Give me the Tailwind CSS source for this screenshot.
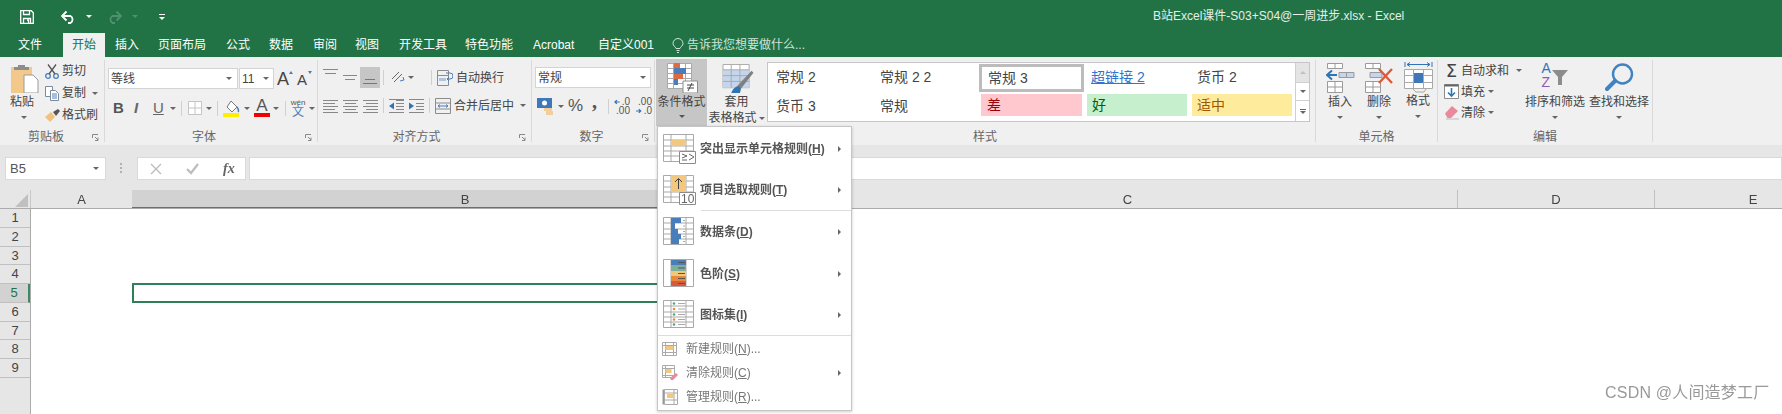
<!DOCTYPE html>
<html lang="zh-CN">
<head>
  <meta charset="UTF-8">
  <title>B站Excel课件-S03+S04@一周进步.xlsx - Excel</title>
  <script src="https://cdn.jsdelivr.net/npm/@tailwindcss/browser@4"></script>
</head>
<body class="bg-white overflow-hidden">
<div class="relative w-[1782px] h-[414px] overflow-hidden flex flex-col blur-[0.4px] text-[12px] text-[#444] font-['Liberation_Sans','Noto_Sans_CJK_SC',sans-serif]">

  <!-- title bar -->
  <div class="h-[33px] shrink-0 bg-[#217346] flex items-center relative">
    <svg class="ml-[20px]" width="14" height="14" viewBox="0 0 14 14" fill="none" stroke="#fff" stroke-width="1.3"><path d="M.7.7h10.6l2 2v10.6H.7z"/><path d="M3.5 1v3.5h6V1M3.5 13V8.5h7V13"/><path d="M7 10h1.5v3" /></svg>
    <svg class="ml-[27px]" width="15" height="14" viewBox="0 0 15 14" fill="none" stroke="#fff" stroke-width="1.8"><path d="M1 6h8.5a4 4 0 0 1 0 7H7"/><path d="M5.500 1.500 1 6l4.500 4.500"/></svg>
    <i class="block ml-[10px] w-0 h-0 border-x-[3px] border-x-transparent border-t-[3px] border-t-white"></i>
    <svg class="ml-[15px]" width="15" height="14" viewBox="0 0 15 14" fill="none" stroke="#4f9170" stroke-width="1.8"><path d="M14 6H5.500a4 4 0 0 0 0 7H8"/><path d="M9.500 1.500 14 6l-4.500 4.500"/></svg>
    <i class="block ml-[10px] w-0 h-0 border-x-[3px] border-x-transparent border-t-[3px] border-t-[#4f9170]"></i>
    <div class="ml-[21px] flex flex-col items-center gap-[2px]"><i class="block w-[6px] h-px bg-white"></i><i class="block w-0 h-0 border-x-[3px] border-x-transparent border-t-[3px] border-t-white"></i></div>
    <span class="absolute left-[1153px] top-[8px] text-[#e4efe9] text-[12px] leading-[17px] whitespace-nowrap">B站Excel课件-S03+S04@一周进步.xlsx - Excel</span>
  </div>

  <!-- tabs -->
  <div class="h-[24px] shrink-0 bg-[#217346] flex text-white leading-[24px] whitespace-nowrap">
    <span class="ml-[18px] w-[24px]">文件</span>
    <span class="ml-[21px] w-[42px] text-center bg-[#f0f0f0] text-[#217346]">开始</span>
    <span class="ml-[10px] w-[24px]">插入</span>
    <span class="ml-[19px] w-[48px]">页面布局</span>
    <span class="ml-[20px] w-[24px]">公式</span>
    <span class="ml-[19px] w-[24px]">数据</span>
    <span class="ml-[20px] w-[24px]">审阅</span>
    <span class="ml-[18px] w-[24px]">视图</span>
    <span class="ml-[20px] w-[48px]">开发工具</span>
    <span class="ml-[18px] w-[48px]">特色功能</span>
    <span class="ml-[20px] w-[46px]">Acrobat</span>
    <span class="ml-[19px] w-[58px]">自定义001</span>
    <svg class="ml-[16px] mt-[5px]" width="12" height="15" viewBox="0 0 12 15" fill="none" stroke="#cfe3d8"><path d="M4 10.500C3.500 8.500 1 8 1 5.500a5 5 0 0 1 10 0C11 8 8.500 8.500 8 10.500z"/><path d="M4.500 12.500h3M5 14.500h2"/></svg>
    <span class="ml-[3px] text-[#cfe3d8]">告诉我您想要做什么...</span>
  </div>

  <!-- ribbon -->
  <div class="h-[88px] shrink-0 bg-[#f0f0f0] flex items-start pt-[3px] whitespace-nowrap">

    <!-- clipboard -->
    <div class="relative w-[105px] h-[82px] border-r border-[#d9d9d9] flex flex-col">
      <div class="h-[69px] flex">
        <div class="w-[45px] pl-[10px] pt-[3px] flex flex-col items-start">
          <svg width="29" height="30" viewBox="0 0 29 30"><path d="M1 4h21v26H1z" fill="#f3c98b"/><path d="M8 2h7v2h4v3H4V4h4z" fill="#8c8c8c"/><path d="M14 12h9l5 5v13H14z" fill="#fff" stroke="#9a9a9a"/></svg>
          <span class="leading-[18px] text-[#444]">粘贴</span>
          <i class="block mt-[5px] ml-[11px] w-0 h-0 border-x-[3px] border-x-transparent border-t-[3px] border-t-[#666]"></i>
        </div>
        <div class="flex flex-col">
          <div class="h-[22px] flex items-center"><svg width="14" height="15" viewBox="0 0 14 15" fill="none" stroke="#4a7ebb" stroke-width="1.300"><circle cx="3" cy="12" r="2.300"/><circle cx="11" cy="12" r="2.300"/><path d="M4 10 11 0.500M10 10 3 0.500" stroke="#555"/></svg><span class="ml-[3px]">剪切</span></div>
          <div class="h-[22px] flex items-center"><svg width="14" height="15" viewBox="0 0 14 15" fill="#fff" stroke="#7d8a99"><path d="M.5.500h7v10h-7z"/><path d="M5.500 4.500h5l3 3v7h-8z"/><path d="M7 8h5M7 10h5M7 12h5" stroke="#4a7ebb"/></svg><span class="ml-[3px]">复制</span><i class="block ml-[6px] w-0 h-0 border-x-[3px] border-x-transparent border-t-[3px] border-t-[#666]"></i></div>
          <div class="h-[22px] flex items-center"><svg width="15" height="13" viewBox="0 0 15 13"><path d="M0 8 6 3l4 5-5 5z" fill="#f0c27e"/><path d="M8 3l5-3 2 2-4 5z" fill="#555"/></svg><span class="ml-[2px]">格式刷</span></div>
        </div>
      </div>
      <div class="h-[13px] leading-[16px] text-center text-[#666] pr-[12px]">剪贴板</div>
      <svg class="absolute right-[5px] bottom-[1px]" width="7" height="7" viewBox="0 0 7 7" fill="none" stroke="#888"><path d="M.5 4V.5H6M3 3l3 3M6 3.500V6.500H3"/></svg>
    </div>

    <!-- font -->
    <div class="relative w-[213px] h-[82px] border-r border-[#d9d9d9] flex flex-col">
      <div class="h-[69px] pt-[8px] flex flex-col">
        <div class="h-[21px] flex items-center">
          <div class="ml-[3px] w-[130px] h-[21px] bg-white border border-[#d4d4d4] flex items-center pl-[2px] pr-[5px] justify-between"><span>等线</span><i class="block w-0 h-0 border-x-[3px] border-x-transparent border-t-[3px] border-t-[#666]"></i></div>
          <div class="ml-px w-[35px] h-[21px] bg-white border border-[#d4d4d4] flex items-center pl-[2px] pr-[4px] justify-between"><span>11</span><i class="block w-0 h-0 border-x-[3px] border-x-transparent border-t-[3px] border-t-[#666]"></i></div>
          <span class="ml-[3px] w-[13px] text-[18px] leading-[20px] relative">A<i class="absolute -right-[3px] top-[2px] w-0 h-0 border-x-[2px] border-x-transparent border-b-[3px] border-b-[#4a7ebb]"></i></span>
          <span class="ml-[7px] w-[12px] text-[15px] leading-[20px] relative mt-[2px]">A<i class="absolute -right-[3px] top-[1px] w-0 h-0 border-x-[2px] border-x-transparent border-t-[3px] border-t-[#4a7ebb]"></i></span>
        </div>
        <div class="mt-[9px] h-[20px] flex items-center">
          <span class="ml-[8px] w-[10px] font-bold text-[15px] text-[#555]">B</span>
          <span class="ml-[11px] w-[9px] italic font-bold text-[15px] text-[#666]">I</span>
          <span class="ml-[10px] w-[13px] text-[15px] underline text-[#666]">U</span>
          <i class="block ml-[4px] w-0 h-0 border-x-[3px] border-x-transparent border-t-[3px] border-t-[#666]"></i>
          <i class="block ml-[5px] w-px h-[15px] bg-[#d0d0d0]"></i>
          <svg class="ml-[6px]" width="14" height="14" viewBox="0 0 14 14" fill="#fff" stroke="#c4c4c4"><path d="M.5.500h13v13H.5zM7 .500v13M.5 7h13"/></svg>
          <i class="block ml-[4px] w-0 h-0 border-x-[3px] border-x-transparent border-t-[3px] border-t-[#666]"></i>
          <i class="block ml-[5px] w-px h-[15px] bg-[#d0d0d0]"></i>
          <svg class="ml-[5px]" width="17" height="17" viewBox="0 0 17 17"><path d="M8 1 14 7l-5 5-5-5z" fill="#fff" stroke="#777"/><path d="M14 7c2 3 2 4 1 5" stroke="#4a7ebb" fill="none" stroke-width="1.500"/><path d="M0 13h16v4H0z" fill="#ffee00"/></svg>
          <i class="block ml-[4px] w-0 h-0 border-x-[3px] border-x-transparent border-t-[3px] border-t-[#666]"></i>
          <div class="ml-[4px] w-[16px] flex flex-col items-center"><span class="text-[17px] leading-[14px] text-[#555]">A</span><i class="block w-[16px] h-[4px] bg-[#f00000]"></i></div>
          <i class="block ml-[3px] w-0 h-0 border-x-[3px] border-x-transparent border-t-[3px] border-t-[#666]"></i>
          <i class="block ml-[6px] w-px h-[15px] bg-[#d0d0d0]"></i>
          <div class="ml-[5px] w-[14px] flex flex-col items-center leading-none"><span class="text-[8px] leading-[7px] text-[#555]">wén</span><span class="text-[12px] text-[#4a7ebb] leading-[12px]">文</span></div>
          <i class="block ml-[4px] w-0 h-0 border-x-[3px] border-x-transparent border-t-[3px] border-t-[#666]"></i>
        </div>
      </div>
      <div class="h-[13px] leading-[16px] text-center text-[#666] pr-[14px]">字体</div>
      <svg class="absolute right-[5px] bottom-[1px]" width="7" height="7" viewBox="0 0 7 7" fill="none" stroke="#888"><path d="M.5 4V.5H6M3 3l3 3M6 3.500V6.500H3"/></svg>
    </div>

    <!-- alignment -->
    <div class="relative w-[214px] h-[82px] border-r border-[#d9d9d9] flex flex-col">
      <div class="h-[69px] flex">
        <div class="pl-[5px] pt-[7px] flex flex-col">
          <div class="h-[21px] flex items-center">
            <svg width="15" height="8" class="mb-[10px]" viewBox="0 0 15 8" stroke="#888"><path d="M0 .500h15M2 4.500h11"/></svg>
            <svg width="14" height="6" class="ml-[5px]" viewBox="0 0 14 6" stroke="#888"><path d="M0 .500h14M2 4.500h10"/></svg>
            <div class="ml-[3px] w-[20px] h-[21px] bg-[#c6c6c6] flex items-end justify-center pb-[3px]"><svg width="14" height="6" viewBox="0 0 14 6" stroke="#777"><path d="M2 .500h10M0 4.500h14"/></svg></div>
            <i class="block ml-[3px] w-px h-[15px] bg-[#d0d0d0]"></i>
            <svg class="ml-[7px]" width="14" height="13" viewBox="0 0 14 13" fill="none" stroke="#666"><path d="M1 8 8 1M3 11 11 3"/><path d="M9 10l4-1-1-3" stroke="#4a7ebb"/></svg>
            <i class="block ml-[3px] w-0 h-0 border-x-[3px] border-x-transparent border-t-[3px] border-t-[#666]"></i>
            <i class="block ml-[17px] w-px h-[15px] bg-[#d0d0d0]"></i>
            <svg class="ml-[5px]" width="16" height="16" viewBox="0 0 16 16" fill="none" stroke="#8c8c8c"><path d="M.5.500h11v15H.5zM.5 5.500h11"/><path d="M2 8h7v3H2z" fill="#a9c4e4" stroke="none"/><path d="M9 3h4a2 2 0 0 1 0 6H10m2-2-2 2 2 2" stroke="#4a7ebb"/></svg>
            <span class="ml-[3px]">自动换行</span>
          </div>
          <div class="mt-[7px] h-[21px] flex items-center">
            <svg width="15" height="14" viewBox="0 0 15 14" stroke="#888"><path d="M0 1.500h15M0 4.500h12M0 7.500h15M0 10.500h12M0 13.500h15"/></svg>
            <svg class="ml-[5px]" width="15" height="14" viewBox="0 0 15 14" stroke="#888"><path d="M0 1.500h15M2 4.500h11M0 7.500h15M2 10.500h11M0 13.500h15"/></svg>
            <svg class="ml-[5px]" width="15" height="14" viewBox="0 0 15 14" stroke="#888"><path d="M0 1.500h15M3 4.500h12M0 7.500h15M3 10.500h12M0 13.500h15"/></svg>
            <i class="block ml-[5px] w-px h-[15px] bg-[#d0d0d0]"></i>
            <svg class="ml-[5px]" width="15" height="14" viewBox="0 0 15 14"><path d="M7 1.500h8M7 4.500h8M7 7.500h8M7 10.500h8M0 13.500h15M0 .500h15" stroke="#888"/><path d="M0 7l5-3.500v7z" fill="#2f75b5"/></svg>
            <svg class="ml-[5px]" width="15" height="14" viewBox="0 0 15 14"><path d="M0 .500h15M7 4.500h8M7 7.500h8M7 10.500h8M0 13.500h15" stroke="#888"/><path d="M5 7 0 3.500v7z" fill="#2f75b5"/></svg>
            <i class="block ml-[5px] w-px h-[15px] bg-[#d0d0d0]"></i>
            <svg class="ml-[5px]" width="16" height="16" viewBox="0 0 16 16" fill="none" stroke="#8c8c8c"><path d="M.5.500h15v15H.5zM.5 5h15M.5 11h15"/><path d="M3 8h10M5 6.500 3 8l2 1.500M11 6.500 13 8l-2 1.500" stroke="#4a7ebb"/></svg>
            <span class="ml-[3px]">合并后居中</span>
            <i class="block ml-[6px] w-0 h-0 border-x-[3px] border-x-transparent border-t-[3px] border-t-[#666]"></i>
          </div>
        </div>
      </div>
      <div class="h-[13px] leading-[16px] text-center text-[#666] pr-[16px]">对齐方式</div>
      <svg class="absolute right-[5px] bottom-[1px]" width="7" height="7" viewBox="0 0 7 7" fill="none" stroke="#888"><path d="M.5 4V.5H6M3 3l3 3M6 3.500V6.500H3"/></svg>
    </div>

    <!-- number -->
    <div class="relative w-[123px] h-[82px] border-r border-[#d9d9d9] flex flex-col">
      <div class="h-[69px] pt-[7px] pl-[3px] flex flex-col">
        <div class="w-[116px] h-[21px] bg-white border border-[#d4d4d4] flex items-center pl-[2px] pr-[4px] justify-between"><span>常规</span><i class="block w-0 h-0 border-x-[3px] border-x-transparent border-t-[3px] border-t-[#666]"></i></div>
        <div class="mt-[9px] h-[18px] flex items-center">
          <svg class="ml-[2px]" width="16" height="17" viewBox="0 0 16 17"><path d="M0 0h15v10H0z" fill="#3f78b8"/><circle cx="7.500" cy="5" r="2.500" fill="#fff"/><path d="M7 10h8v3H7zM9 13h7v4H9z" fill="#f2cf9a"/></svg>
          <i class="block ml-[5px] w-0 h-0 border-x-[3px] border-x-transparent border-t-[3px] border-t-[#666]"></i>
          <span class="ml-[4px] w-[15px] text-[17px] leading-[18px] text-[#555]">%</span>
          <span class="ml-[9px] mb-[10px] w-[6px] text-[20px] font-bold leading-[14px] text-[#555] font-['Liberation_Serif',serif]">,</span>
          <i class="block ml-[10px] w-px h-[15px] bg-[#d0d0d0]"></i>
          <div class="ml-[5px] w-[16px] flex flex-col text-[10px] leading-[8px] text-[#555]">
            <div class="h-[8px] flex items-center justify-end"><svg width="6" height="6" viewBox="0 0 6 6" fill="none" stroke="#2f75b5" stroke-width="1.300"><path d="M6 3H1M3 1 1 3l2 2"/></svg><span class="ml-[2px]">.0</span></div>
            <div class="h-[8px] mt-px flex items-center justify-end"><span>.00</span></div>
          </div>
          <div class="ml-[6px] w-[16px] flex flex-col text-[10px] leading-[8px] text-[#555]">
            <div class="h-[8px] flex items-center justify-end"><span>.00</span></div>
            <div class="h-[8px] mt-px flex items-center justify-end"><svg width="6" height="6" viewBox="0 0 6 6" fill="none" stroke="#2f75b5" stroke-width="1.300"><path d="M0 3h5M3 1l2 2-2 2"/></svg><span class="ml-[2px]">.0</span></div>
          </div>
        </div>
      </div>
      <div class="h-[13px] leading-[16px] text-center text-[#666] pr-[3px]">数字</div>
      <svg class="absolute right-[5px] bottom-[1px]" width="7" height="7" viewBox="0 0 7 7" fill="none" stroke="#888"><path d="M.5 4V.5H6M3 3l3 3M6 3.500V6.500H3"/></svg>
    </div>

    <!-- styles -->
    <div class="w-[661px] h-[82px] border-r border-[#d9d9d9] flex flex-col">
      <div class="h-[69px] flex items-start">
        <div class="ml-px w-[51px] h-[67px] -mt-px bg-[#c6c6c6] flex flex-col items-center">
          <svg class="mt-[4px] ml-px" width="31" height="30" viewBox="0 0 31 30"><path d="M.5.500h24v25H.5zM.5 5.500h24M.5 10.500h24M.5 15.500h24M.5 20.500h24M6.500.500v25M18.500.500v25" fill="#fff" stroke="#a9a9a9"/><path d="M7 0h6v5H7z" fill="#dc6a43"/><path d="M7 5h12v6H7z" fill="#4a7ebb"/><path d="M7 11h9v5H7z" fill="#dc6a43"/><path d="M7 16h4v6H7z" fill="#4a7ebb"/><path d="M16 18h14.500v12H16z" fill="#fff" stroke="#8c8c8c"/><path d="M20 22h7M20 25h7M25 20l-4 8" stroke="#444" fill="none"/></svg>
          <span class="mt-[1px] leading-[16px]">条件格式</span>
          <i class="block mt-[5px] w-0 h-0 border-x-[3px] border-x-transparent border-t-[3px] border-t-[#555]"></i>
        </div>
        <div class="ml-[2px] w-[55px] h-[66px] flex flex-col items-center">
          <svg class="mt-[4px] ml-[3px]" width="32" height="30" viewBox="0 0 32 30"><path d="M.5.500h27v24H.5z" fill="#fff" stroke="#a9a9a9"/><path d="M.5 6h27v18.500H.5z" fill="#c5d6ec"/><path d="M.5 6h27M.5 12h27M.5 18h27M9 .500v24M18 .500v24" stroke="#a9a9a9" fill="none"/><path d="M14 24 30 7l2 2-14 18z" fill="#808080"/><path d="M9 30c2-6 6-8 9-6l1 2-1 4z" fill="#2f75b5"/></svg>
          <span class="leading-[16px] mt-px">套用</span>
          <span class="leading-[16px] flex items-center">表格格式<i class="block ml-[2px] w-0 h-0 border-x-[3px] border-x-transparent border-t-[3px] border-t-[#666]"></i></span>
        </div>
        <div class="ml-[3px] mt-[2px] w-[543px] h-[60px] flex bg-white border border-[#c6c6c6]">
          <div class="w-[528px] grid grid-cols-[105px_105px_105px_105px_105px] grid-rows-[29px_29px] text-[14px] text-[#444] pl-px">
            <div class="flex items-center pl-[7px]">常规 2</div>
            <div class="flex items-center pl-[6px]">常规 2 2</div>
            <div class="flex items-center pl-[6px] mt-px border-[3px] border-[#bcbcbc]">常规 3</div>
            <div class="flex items-center pl-[7px] text-[#2f75d0] underline">超链接 2</div>
            <div class="flex items-center pl-[8px]">货币 2</div>
            <div class="flex items-center pl-[7px]">货币 3</div>
            <div class="flex items-center pl-[6px]">常规</div>
            <div class="flex items-center pl-[6px] ml-[2px] mr-[2px] mt-[2px] mb-[5px] bg-[#ffc7ce] text-[#9c0006]">差</div>
            <div class="flex items-center pl-[5px] ml-[3px] mr-[2px] mt-[2px] mb-[5px] bg-[#c6efce] text-[#006100]">好</div>
            <div class="flex items-center pl-[5px] ml-[3px] mr-[2px] mt-[2px] mb-[5px] bg-[#ffeb9c] text-[#9c5700]">适中</div>
          </div>
          <div class="w-[14px] ml-auto flex flex-col border-l border-[#d0d0d0] bg-[#f0f0f0]">
            <div class="h-[20px] bg-[#e4e4e4] border-b border-[#d0d0d0] flex items-center justify-center"><i class="block w-0 h-0 border-x-[3px] border-x-transparent border-b-[3px] border-b-[#c0c0c0]"></i></div>
            <div class="h-[18px] bg-white border-b border-[#d0d0d0] flex items-center justify-center"><i class="block w-0 h-0 border-x-[3px] border-x-transparent border-t-[3px] border-t-[#666]"></i></div>
            <div class="flex-1 bg-white flex flex-col items-center justify-center gap-[1px]"><i class="block w-[6px] h-px bg-[#666]"></i><i class="block w-0 h-0 border-x-[3px] border-x-transparent border-t-[3px] border-t-[#666]"></i></div>
          </div>
        </div>
      </div>
      <div class="h-[13px] leading-[16px] text-center text-[#666]">样式</div>
    </div>

    <!-- cells -->
    <div class="w-[122px] h-[82px] border-r border-[#d9d9d9] flex flex-col">
      <div class="h-[69px] flex">
        <div class="ml-[9px] w-[30px] flex flex-col items-center">
          <svg class="mt-[3px]" width="29" height="30" viewBox="0 0 29 30" fill="#fff" stroke="#9a9a9a"><path d="M1.500.500h15v5h-15zM9 .500v5M1.500 18.500h15v11h-15zM1.500 24h15M9 18.500v11"/><path d="M13 9.500h15v5H13zM20.500 9.500v5" fill="#c5d6ec"/><path d="M11 12H1M6 7.500l-5 4.500 5 4.500" fill="none" stroke="#2f75b5" stroke-width="2"/></svg>
          <span class="leading-[16px] mt-px">插入</span>
          <i class="block mt-[6px] w-0 h-0 border-x-[3px] border-x-transparent border-t-[3px] border-t-[#666]"></i>
        </div>
        <div class="ml-[9px] w-[30px] flex flex-col items-center">
          <svg class="mt-[3px]" width="30" height="30" viewBox="0 0 30 30" fill="#fff" stroke="#9a9a9a"><path d="M1.500.500h15v5h-15zM9 .500v5M1.500 18.500h15v11h-15zM1.500 24h15M9 18.500v11"/><path d="M6 9.500h12v5H6z" fill="#c5d6ec"/><path d="M15 6l13 14M28 6 15 20" fill="none" stroke="#dc5a3c" stroke-width="2.400"/></svg>
          <span class="leading-[16px] mt-px">删除</span>
          <i class="block mt-[6px] w-0 h-0 border-x-[3px] border-x-transparent border-t-[3px] border-t-[#666]"></i>
        </div>
        <div class="ml-[9px] w-[30px] flex flex-col items-center">
          <svg class="mt-[2px]" width="29" height="31" viewBox="0 0 29 31" fill="none"><path d="M1 0v5M28 0v5M3 2.500h23M6 .500 3 2.500l3 2M23 .500l3 2-3 2" stroke="#2f75b5"/><path d="M.5 7.500h28v19H.5zM.5 13.500h28M.5 20.500h28M9.500 7.500v19M19.500 7.500v19" stroke="#a9a9a9" fill="#fff"/><path d="M10 11h9v10h-9z" fill="#3f78b8"/><path d="M9 27l3 3h8l2-3" stroke="#a9a9a9"/></svg>
          <span class="leading-[16px]">格式</span>
          <i class="block mt-[6px] w-0 h-0 border-x-[3px] border-x-transparent border-t-[3px] border-t-[#666]"></i>
        </div>
      </div>
      <div class="h-[13px] leading-[16px] text-center text-[#666]">单元格</div>
    </div>

    <!-- editing -->
    <div class="w-[215px] h-[82px] border-r border-[#d9d9d9] flex flex-col">
      <div class="h-[69px] flex">
        <div class="ml-[6px] w-[78px] flex flex-col">
          <div class="h-[21px] flex items-center"><span class="w-[15px] text-center text-[18px] leading-[18px] text-[#444] font-['DejaVu_Sans',sans-serif]">Σ</span><span class="ml-[2px]">自动求和</span><i class="block ml-[7px] w-0 h-0 border-x-[3px] border-x-transparent border-t-[3px] border-t-[#666]"></i></div>
          <div class="h-[21px] flex items-center"><svg width="15" height="15" viewBox="0 0 15 15" fill="#fff" stroke="#8c8c8c"><path d="M.5.500h14v14H.5z"/><path d="M.5 1.500h14" stroke="#666" stroke-width="2"/><path d="M7.500 4v8M4 8.500l3.500 3.500L11 8.500" fill="none" stroke="#2f75b5" stroke-width="1.600"/></svg><span class="ml-[2px]">填充</span><i class="block ml-[3px] w-0 h-0 border-x-[3px] border-x-transparent border-t-[3px] border-t-[#666]"></i></div>
          <div class="h-[21px] flex items-center"><svg width="15" height="15" viewBox="0 0 15 15"><path d="M1 8.500 8 1l6 5-7 7H3.500z" fill="#e88a9c"/><path d="M2 14h13" stroke="#bbb"/></svg><span class="ml-[2px]">清除</span><i class="block ml-[3px] w-0 h-0 border-x-[3px] border-x-transparent border-t-[3px] border-t-[#666]"></i></div>
        </div>
        <div class="ml-[3px] w-[60px] flex flex-col items-center">
          <div class="h-[32px] w-[30px] mt-px ml-[3px] flex">
            <div class="flex flex-col text-[14px] leading-[14px]"><span class="text-[#2f75b5]">A</span><span class="text-[#8e5bb5]">Z</span></div>
            <svg class="mt-[9px] ml-px" width="16" height="15" viewBox="0 0 16 15"><path d="M0 0h16L10 7v8H6V7z" fill="#8c8c8c"/></svg>
          </div>
          <span class="leading-[16px] mt-px">排序和筛选</span>
          <i class="block mt-[6px] w-0 h-0 border-x-[3px] border-x-transparent border-t-[3px] border-t-[#666]"></i>
        </div>
        <div class="ml-[4px] w-[60px] flex flex-col items-center">
          <svg class="mt-[3px]" width="29" height="29" viewBox="0 0 29 29" fill="none" stroke="#3f83c0"><circle cx="17.500" cy="11" r="9.500" stroke-width="2.400"/><path d="M10 18 2 26" stroke-width="4" stroke-linecap="round"/></svg>
          <span class="leading-[16px] mt-[2px]">查找和选择</span>
          <i class="block mt-[6px] w-0 h-0 border-x-[3px] border-x-transparent border-t-[3px] border-t-[#666]"></i>
        </div>
      </div>
      <div class="h-[13px] leading-[16px] text-center text-[#666]">编辑</div>
    </div>
  </div>

  <!-- formula bar -->
  <div class="h-[45px] shrink-0 bg-[#e6e6e6] pt-[12px] flex items-start">
    <div class="ml-[5px] w-[101px] h-[23px] bg-white border border-[#d9d9d9] flex items-center justify-between pl-[4px] pr-[6px] text-[13px] text-[#555]"><span>B5</span><i class="block w-0 h-0 border-x-[3px] border-x-transparent border-t-[3px] border-t-[#666]"></i></div>
    <div class="ml-[14px] mt-[6px] flex flex-col gap-[2px]"><i class="block w-[2px] h-[2px] bg-[#b0b0b0]"></i><i class="block w-[2px] h-[2px] bg-[#b0b0b0]"></i><i class="block w-[2px] h-[2px] bg-[#b0b0b0]"></i></div>
    <div class="ml-[15px] w-[109px] h-[23px] bg-white border border-[#d9d9d9] flex items-center">
      <svg class="ml-[12px]" width="12" height="12" viewBox="0 0 12 12" stroke="#bdbdbd" stroke-width="1.400"><path d="M1 1l10 10M11 1 1 11"/></svg>
      <svg class="ml-[24px]" width="13" height="12" viewBox="0 0 13 12" fill="none" stroke="#bdbdbd" stroke-width="2.200"><path d="M1 6l4 4 7-9"/></svg>
      <span class="ml-[24px] font-['Liberation_Serif',serif] italic font-bold text-[14px] text-[#666]">fx</span>
    </div>
    <div class="ml-[3px] flex-1 h-[23px] bg-white border border-[#d9d9d9]"></div>
  </div>

  <!-- column headers -->
  <div class="h-[19px] shrink-0 bg-[#e6e6e6] flex border-b border-[#ababab] text-[13px] leading-[19px] text-center text-[#444] overflow-hidden">
    <div class="w-[31px] shrink-0 border-r border-[#c8c8c8] flex justify-end items-end pr-[2px] pb-[1px]"><i class="block w-0 h-0 border-l-[13px] border-l-transparent border-b-[13px] border-b-[#c0c0c0]"></i></div>
    <div class="w-[101px] shrink-0">A</div>
    <div class="w-[666px] shrink-0 bg-[#d2d2d2] border-b-2 border-[#3c8a62] h-[19px]">B</div>
    <div class="w-[660px] shrink-0 border-r border-[#c0c0c0]">C</div>
    <div class="w-[197px] shrink-0 border-r border-[#c0c0c0]">D</div>
    <div class="w-[196px] shrink-0">E</div>
  </div>

  <!-- sheet -->
  <div class="flex-1 flex relative">
    <div class="w-[31px] h-full bg-[#e6e6e6] border-r border-[#ababab] flex flex-col text-[13px] text-center text-[#444] leading-[18px]">
      <div class="h-[18.75px] border-b border-[#c0c0c0]">1</div>
      <div class="h-[18.75px] border-b border-[#c0c0c0]">2</div>
      <div class="h-[18.75px] border-b border-[#c0c0c0]">3</div>
      <div class="h-[18.75px] border-b border-[#c0c0c0]">4</div>
      <div class="h-[18.75px] bg-[#d2d2d2] border-r-2 border-r-[#3c8a62] border-b border-[#c0c0c0] text-[#217346]">5</div>
      <div class="h-[18.75px] border-b border-[#c0c0c0]">6</div>
      <div class="h-[18.75px] border-b border-[#c0c0c0]">7</div>
      <div class="h-[18.75px] border-b border-[#c0c0c0]">8</div>
      <div class="h-[18.75px] border-b border-[#c0c0c0]">9</div>
    </div>
    <div class="absolute left-[132px] top-[74px] w-[666px] h-[20px] border-2 border-[#2f8059]"></div>
  </div>

  <!-- conditional format menu -->
  <div class="absolute left-[657px] top-[126px] w-[195px] h-[285px] bg-white border border-[#c6c6c6] shadow-[0_1px_3px_rgba(0,0,0,0.2)] pt-px flex flex-col text-[12px] text-[#555]">
    <div class="h-[41px] flex items-center pl-[5px] font-bold">
      <svg width="33" height="30" viewBox="0 0 33 30"><path d="M.5.500h30v27H.5zM.5 6h30M.5 12h30M.5 17h30M.5 22h30M8 .500v27M23 .500v27" fill="#fff" stroke="#a9a9a9"/><path d="M8 6h15v6H8z" fill="#f2c77e"/><path d="M16.500 17.500h16v12h-16z" fill="#fff" stroke="#8c8c8c"/><path d="M19 20l5 2-5 2M19 26h5M26 20l5 3-5 3" fill="none" stroke="#666"/></svg>
      <span class="ml-[4px]">突出显示单元格规则(<u>H</u>)</span>
      <i class="block ml-auto mr-[10px] w-0 h-0 border-y-[3px] border-y-transparent border-l-[3px] border-l-[#666]"></i>
    </div>
    <div class="h-[41px] flex items-center pl-[5px] font-bold">
      <svg width="33" height="30" viewBox="0 0 33 30"><path d="M.5.500h30v27H.5zM.5 6h30M.5 12h30M.5 17h30M.5 22h30M8 .500v27M23 .500v27" fill="#fff" stroke="#a9a9a9"/><path d="M8 0h15v17H8z" fill="#f2c77e"/><path d="M15.500 14V4M12 7l3.500-3.500L19 7" fill="none" stroke="#444"/><path d="M16.500 17.500h16v12h-16z" fill="#fff" stroke="#8c8c8c"/><text x="18" y="28" font-size="12" fill="#666" font-weight="400">10</text></svg>
      <span class="ml-[4px]">项目选取规则(<u>T</u>)</span>
      <i class="block ml-auto mr-[10px] w-0 h-0 border-y-[3px] border-y-transparent border-l-[3px] border-l-[#666]"></i>
    </div>
    <div class="h-px ml-[43px] bg-[#dcdcdc]"></div>
    <div class="h-[42px] flex items-center pl-[5px] font-bold">
      <svg width="33" height="30" viewBox="0 0 33 30"><path d="M.5.500h30v27H.5zM.5 6h30M.5 12h30M.5 17h30M.5 22h30M8 .500v27M23 .500v27" fill="#fff" stroke="#a9a9a9"/><path d="M8 1h10v5H8zM8 6h4v6H8zM8 12h7v5H8zM8 17h10v5H8zM8 22h8v5H8z" fill="#4a7ebb"/><path d="M20 3.500h2M20 9h2M20 14.500h2M20 19.500h2M20 24.500h2" stroke="#aaa"/></svg>
      <span class="ml-[4px]">数据条(<u>D</u>)</span>
      <i class="block ml-auto mr-[10px] w-0 h-0 border-y-[3px] border-y-transparent border-l-[3px] border-l-[#666]"></i>
    </div>
    <div class="h-[41px] flex items-center pl-[5px] font-bold">
      <svg width="33" height="30" viewBox="0 0 33 30"><path d="M.5.500h30v27H.5zM8 .500v27M23 .500v27" fill="#fff" stroke="#a9a9a9"/><path d="M8 1h15v5H8z" fill="#4a7ebb"/><path d="M8 6h15v6H8z" fill="#7fae9a"/><path d="M8 12h15v5H8z" fill="#f0c878"/><path d="M8 17h15v5H8z" fill="#e8893a"/><path d="M8 22h15v5H8z" fill="#d9593c"/><path d="M15 3.500h7M15 9h7M15 14.500h7M15 19.500h7M15 24.500h7" stroke="#555"/></svg>
      <span class="ml-[4px]">色阶(<u>S</u>)</span>
      <i class="block ml-auto mr-[10px] w-0 h-0 border-y-[3px] border-y-transparent border-l-[3px] border-l-[#666]"></i>
    </div>
    <div class="h-[41px] flex items-center pl-[5px] font-bold">
      <svg width="33" height="30" viewBox="0 0 33 30"><path d="M.5.500h30v27H.5zM.5 6h30M.5 12h30M.5 17h30M.5 22h30M8 .500v27M23 .500v27" fill="#fff" stroke="#a9a9a9"/><circle cx="11" cy="3.500" r="1.300" fill="#5aa287"/><circle cx="11" cy="9" r="1.300" fill="#ee8a2c"/><circle cx="11" cy="14.500" r="1.300" fill="#5aa287"/><circle cx="11" cy="19.500" r="1.300" fill="#ee8a2c"/><circle cx="11" cy="24.500" r="1.300" fill="#5aa287"/><path d="M15 3.500h7M15 9h7M15 14.500h7M15 19.500h7M15 24.500h7" stroke="#aaa"/></svg>
      <span class="ml-[4px]">图标集(<u>I</u>)</span>
      <i class="block ml-auto mr-[10px] w-0 h-0 border-y-[3px] border-y-transparent border-l-[3px] border-l-[#666]"></i>
    </div>
    <div class="h-px bg-[#dcdcdc]"></div>
    <div class="h-[24px] mt-px flex items-center pl-[4px] text-[#777]">
      <svg width="16" height="15" viewBox="0 0 16 15"><path d="M.5.500h14v13H.5zM.5 3.500h14M.5 10.500h14M3.500.500v13M11.500.500v13" fill="#fff" stroke="#aaa"/><path d="M3.500 4h8v4h-8z" fill="#f2c77e"/></svg>
      <span class="ml-[8px]">新建规则(<u>N</u>)...</span>
    </div>
    <div class="h-[24px] flex items-center pl-[4px] text-[#777]">
      <svg width="16" height="16" viewBox="0 0 16 16"><path d="M.5.500h12v12H.5zM.5 3.500h12M.5 10.500h12M3.500.500v12" fill="#fff" stroke="#aaa"/><path d="M3.500 4h6v4h-6z" fill="#f2c77e"/><path d="M8 13l6-5 2 2-5 5H9z" fill="#e88a9c"/></svg>
      <span class="ml-[8px]">清除规则(<u>C</u>)</span>
      <i class="block ml-auto mr-[10px] w-0 h-0 border-y-[3px] border-y-transparent border-l-[3px] border-l-[#666]"></i>
    </div>
    <div class="h-[24px] flex items-center pl-[4px] text-[#777]">
      <svg width="16" height="16" viewBox="0 0 16 16"><path d="M.5.500h2v15h-2z" fill="#999"/><path d="M2.500.500h13v15h-13zM2.500 4h13M2.500 11h13M12 .500v15" fill="#fff" stroke="#aaa"/><path d="M5 5h7v4H5z" fill="#f2c77e"/></svg>
      <span class="ml-[8px]">管理规则(<u>R</u>)...</span>
    </div>
  </div>

  <!-- watermark -->
  <span class="absolute left-[1605px] top-[383px] text-[16px] leading-[20px] text-[#999] whitespace-nowrap tracking-[0.2px]">CSDN @人间造梦工厂</span>
</div>
</body>
</html>
